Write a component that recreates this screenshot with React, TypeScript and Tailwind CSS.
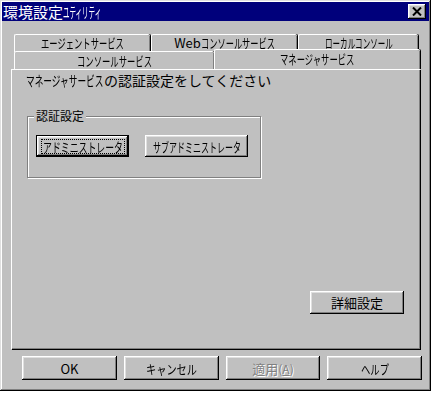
import React from "react";

const font = { fontFamily: '"Noto Sans CJK JP", "Liberation Sans", sans-serif' };

const raised =
  "shadow-[inset_-1px_-1px_#000,inset_1px_1px_#fff,inset_-2px_-2px_#808080,inset_2px_2px_#dfdfdf]";

/* condensed kana text: fitted horizontally to the width seen in the reference */
function K({ t, w, size = 13 }: { t: string; w: number; size?: number }) {
  const s = w / (t.length * size);
  return (
    <span className="inline-block whitespace-nowrap" style={{ width: w, fontSize: size }}>
      <span className="inline-block origin-left" style={{ transform: `scaleX(${s})` }}>
        {t}
      </span>
    </span>
  );
}

function Btn({ children, className = "" }: { children: React.ReactNode; className?: string }) {
  return (
    <div className={`flex items-center justify-center bg-[#c0c0c0] text-[13px] leading-none text-black ${raised} ${className}`}>
      {children}
    </div>
  );
}

function Tab({ children, className = "" }: { children: React.ReactNode; className?: string }) {
  return (
    <div
      className={`flex justify-center bg-[#c0c0c0] text-[13px] leading-none text-black border-t border-l border-white rounded-t-[2px] shadow-[inset_-1px_0_#808080,1px_0_#000] ${className}`}
    >
      {children}
    </div>
  );
}

export default function App() {
  return (
    <div className="w-[433px] h-[393px] bg-white" style={font}>
      <div className="relative w-[431px] h-[391px] bg-[#c0c0c0] shadow-[inset_-1px_-1px_#000,inset_1px_1px_#dfdfdf,inset_-2px_-2px_#808080,inset_2px_2px_#fff] p-[2px] flex flex-col">
        {/* title bar */}
        <div className="h-[19px] bg-[#00007b] flex items-center justify-between pl-[1px] pr-[3px]">
          <span className="text-white text-[15px] leading-none flex items-center">
            環境設定<K t="ユティリティ" w={39} size={15} />
          </span>
          <div className={`w-[18px] h-[15px] bg-[#c0c0c0] flex items-center justify-center ${raised}`}>
            <svg width="10" height="9" viewBox="0 0 10 9">
              <path d="M1 0.5 L9 8.5 M9 0.5 L1 8.5" stroke="#000" strokeWidth="2" />
            </svg>
          </div>
        </div>

        {/* tabs */}
        <div className="mt-[13px] ml-[12px] flex flex-col">
          <div className="flex h-[18px]">
            <Tab className="w-[136px] pt-[1px]"><K t="エージェントサービス" w={83} /></Tab>
            <Tab className="w-[146px] ml-[1px] pt-[1px]">
              <span className="text-[13px]">Web</span>
              <K t="コンソールサービス" w={74} />
            </Tab>
            <Tab className="w-[120px] ml-[1px] pt-[1px]"><K t="ローカルコンソール" w={68} /></Tab>
          </div>
          <div className="flex h-[18px] -mt-[1px] items-end">
            <Tab className="w-[200px] h-[18px] pt-[2px]"><K t="コンソールサービス" w={75} /></Tab>
            <Tab className="w-[206px] h-[20px] -mt-[2px] pt-[2px] relative z-10"><K t="マネージャサービス" w={75} /></Tab>
          </div>
        </div>

        {/* panel */}
        <div className="ml-[9px] w-[409px] h-[280px] border-t border-l border-white shadow-[inset_-1px_-1px_#808080,1px_1px_#000] flex flex-col">
          <div className="ml-[14px] mt-[2px] text-[14px] leading-[16px] text-black whitespace-nowrap">
            <K t="マネージャサービス" w={78} size={14} />の認証設定をしてください
          </div>

          <div className="relative ml-[15px] mt-[28px] w-[234px] h-[62px] border border-[#808080] shadow-[inset_1px_1px_#fff,1px_1px_#fff]">
            <span className="absolute -top-[9px] left-[6px] bg-[#c0c0c0] px-[2px] text-[12px] leading-[16px] text-black">認証設定</span>
            <div className="flex mt-[18px] ml-[8px] gap-[16px]">
              <div className="w-[93px] h-[22px] border border-black">
                <Btn className="w-full h-full">
                  <span className="flex items-center border border-dotted border-black px-[1px] h-[15px]">
                    <K t="アドミニストレータ" w={80} />
                  </span>
                </Btn>
              </div>
              <Btn className="w-[103px] h-[22px]"><K t="サブアドミニストレータ" w={88} /></Btn>
            </div>
          </div>

          <div className="flex-1" />
          <div className="flex justify-end mr-[16px] mb-[35px]">
            <Btn className="w-[94px] h-[23px]">詳細設定</Btn>
          </div>
        </div>

        {/* bottom buttons */}
        <div className="flex ml-[20px] mt-[7px] gap-[7px]">
          <Btn className="w-[95px] h-[24px]"><span className="text-[13px]">OK</span></Btn>
          <Btn className="w-[95px] h-[24px]"><K t="キャンセル" w={51} /></Btn>
          <Btn className="w-[94px] h-[24px]">
            <span className="text-[#808080] [text-shadow:1px_1px_#fff] whitespace-nowrap">
              適用<span className="text-[12px]">(<span className="underline">A</span>)</span>
            </span>
          </Btn>
          <Btn className="w-[95px] h-[24px]"><K t="ヘルプ" w={28} /></Btn>
        </div>
      </div>
    </div>
  );
}
